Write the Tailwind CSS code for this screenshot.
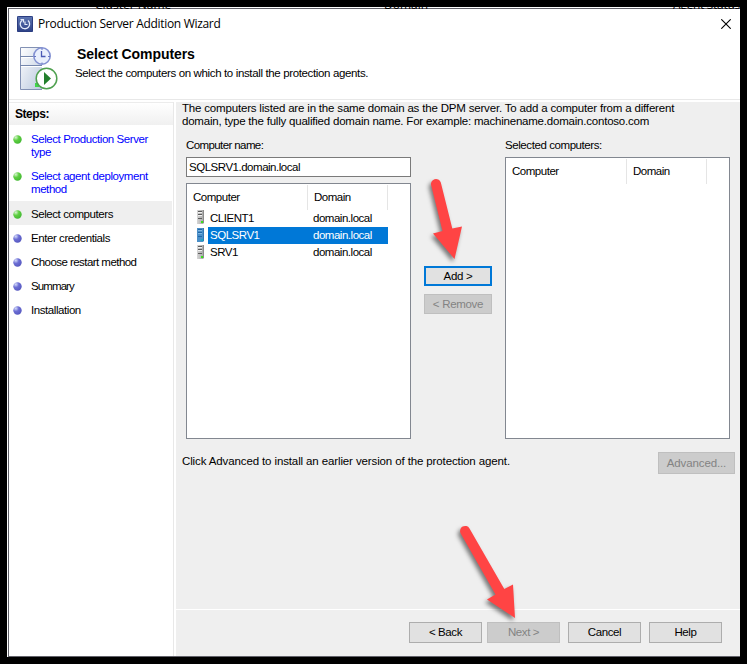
<!DOCTYPE html>
<html lang="en">
<head>
<meta charset="utf-8">
<title>Production Server Addition Wizard</title>
<script src="https://cdn.jsdelivr.net/npm/@tailwindcss/browser@4"></script>
</head>
<body class="w-[747px] h-[664px] overflow-hidden bg-black p-[7px] pb-0 font-['Liberation_Sans',Arial,sans-serif] text-[11.5px] leading-[13px] text-black whitespace-nowrap">
<svg class="absolute w-0 h-0" aria-hidden="true">
  <defs>
    <radialGradient id="gg" cx=".3" cy=".25" r=".8"><stop offset="0" stop-color="#d8f5d2"/><stop offset=".45" stop-color="#5fcf42"/><stop offset="1" stop-color="#42b832"/></radialGradient>
    <radialGradient id="gb" cx=".3" cy=".25" r=".8"><stop offset="0" stop-color="#d4dcfa"/><stop offset=".45" stop-color="#6c6ed4"/><stop offset="1" stop-color="#5658c0"/></radialGradient>
    <linearGradient id="sv" x1="0" x2="1" y1="0" y2="1"><stop offset="0" stop-color="#fff"/><stop offset="1" stop-color="#b9c8de"/></linearGradient>
    <linearGradient id="ti" x1="0" x2="0" y1="0" y2="1"><stop offset="0" stop-color="#5f78b4"/><stop offset="1" stop-color="#2c3f85"/></linearGradient>
    <linearGradient id="tw" x1="0" x2="1"><stop offset="0" stop-color="#d6d6d6"/><stop offset="1" stop-color="#a2a2a2"/></linearGradient>
    <symbol id="dotg" viewBox="0 0 9 9"><circle cx="4.5" cy="4.5" r="4.2" fill="url(#gg)"/></symbol>
    <symbol id="dotb" viewBox="0 0 9 9"><circle cx="4.5" cy="4.5" r="4.2" fill="url(#gb)"/></symbol>
    <symbol id="tower" viewBox="0 0 8 14"><path d="M1 0H8V13L7 14H1Z" fill="url(#tw)"/><path d="M7.500 0V13" stroke="#8a8a8a"/><path d="M2 1.500H6M2 4.500H6M2 8.500H6" stroke="#5c5c5c"/><path d="M2 2.500H6M2 5.500H6" stroke="#f2f2f2"/><rect x="5" y="11" width="2" height="2" fill="#3be01c"/></symbol>
    <symbol id="towersel" viewBox="0 0 8 14"><path d="M1 0H8V13L7 14H1Z" fill="#4a8fc8"/><path d="M7.500 0V13" stroke="#2f78b6"/><path d="M2 1.500H6M2 4.500H6M2 8.500H6" stroke="#1f66a6"/><path d="M2 2.500H6M2 5.500H6" stroke="#7db5e2"/><rect x="5" y="11" width="2" height="2" fill="#1ba8c0"/></symbol>
  </defs>
</svg>
<div class="relative w-[733px] h-[650px] bg-white pl-px pt-px">
  <div class="absolute left-0 top-0 w-full h-[2px] overflow-hidden font-['Open_Sans',sans-serif] text-[12px] leading-[14px]"><span class="absolute left-[88px] -top-[9px]">Cluster Name</span><span class="absolute left-[377px] -top-[9px]">Domain</span><span class="absolute left-[666px] -top-[9px] tracking-[-0.3px]">Agent Status</span></div>
  <div class="w-[732px] h-[649px] border-l border-t border-b border-[#62626a] flex flex-col">
    <header class="h-[91px] border-b border-[#e8e8e8] shrink-0">
      <div class="h-[30px] flex items-center pl-2 pr-[9px]">
        <svg class="size-4 mr-[5px]" viewBox="0 0 16 16"><rect width="16" height="16" rx="1" fill="url(#ti)"/><rect x=".5" y=".5" width="15" height="15" rx="1" fill="none" stroke="#2b3d80"/><path d="M5.500 4A4.700 4.700 0 1 0 11 4.500" fill="none" stroke="#e4ebfa" stroke-width="1.300"/><path d="M3.500 3.500H6.500V6.500M8 5.500V8.500H10.500" fill="none" stroke="#e4ebfa" stroke-width="1.200"/></svg>
        <h1 class="font-['Open_Sans',sans-serif] text-[12px] tracking-[-0.31px] leading-4 grow">Production Server Addition Wizard</h1>
        <svg class="size-[10px]" viewBox="0 0 10 10"><path d="M.3.3 9.700 9.700M9.700.3.3 9.700" stroke="#000" stroke-width="1.100"/></svg>
      </div>
      <div class="flex pl-[11px]">
        <svg class="w-[38px] h-[44px] mt-[8px]" viewBox="0 0 38 44"><path d="M.5.5H22V42.500H.5Z" fill="url(#sv)"/><path d="M22 .5H.5V42.500H22" fill="none" stroke="#8291b4"/><path d="M0 9.500H22M0 18.500H22" stroke="#7587ad"/><path d="M1 10.500H22M1 19.500H22" stroke="#fff"/><path d="M15 36H19V40H15Z" fill="#3fd64a"/><circle cx="22" cy="9" r="8.200" fill="#e9effc" stroke="#8391d2" stroke-width="1.600"/><path d="M21.500 4V9.500H25.500" fill="none" stroke="#4a5ab4" stroke-width="1.300"/><path d="M22 1V3M22 15.500V17M14 9.500H16M28 9.500H30" stroke="#6675c4"/><circle cx="26.500" cy="31.500" r="10.300" fill="#fff" stroke="#4fa04f" stroke-width="1.500"/><path d="M24 25V38L31 31.500Z" fill="#237f2c"/></svg>
        <div class="pl-[17px] pt-[7px]">
          <h2 class="font-bold text-[14px] leading-[17px] pl-[2px] tracking-[-0.08px]">Select Computers</h2>
          <p class="mt-[4px] tracking-[-0.36px]">Select the computers on which to install the protection agents.</p>
        </div>
      </div>
    </header>
    <div class="flex grow">
      <aside class="w-[165px] mt-[2px] border-r border-[#e8e8e8] shrink-0">
        <div class="h-[23px] border-t border-[#ececec] bg-linear-to-b from-white to-[#f0f0f0] pl-[6px] pt-[5px] font-bold tracking-[-0.45px] text-[12px]">Steps:</div>
        <ol class="tracking-[-0.43px]">
          <li class="flex h-[37px] pt-[8px] text-[#0000ff]"><svg class="size-[9px] ml-[4px] mt-[2px] mr-[9px]"><use href="#dotg"/></svg><span>Select Production Server<br>type</span></li>
          <li class="flex h-[39px] pt-[8px] text-[#0000ff]"><svg class="size-[9px] ml-[4px] mt-[2px] mr-[9px]"><use href="#dotg"/></svg><span>Select agent deployment<br>method</span></li>
          <li class="flex h-[24px] w-[163px] pt-[2px] items-center bg-[#efefef]"><svg class="size-[9px] ml-[4px] mr-[9px]"><use href="#dotg"/></svg>Select computers</li>
          <li class="flex h-[24px] pt-[2px] items-center"><svg class="size-[9px] ml-[4px] mr-[9px]"><use href="#dotb"/></svg>Enter credentials</li>
          <li class="flex h-[24px] pt-[2px] items-center tracking-[-0.55px]"><svg class="size-[9px] ml-[4px] mr-[9px]"><use href="#dotb"/></svg>Choose restart method</li>
          <li class="flex h-[24px] pt-[2px] items-center tracking-[-0.9px]"><svg class="size-[9px] ml-[4px] mr-[9px]"><use href="#dotb"/></svg>Summary</li>
          <li class="flex h-[24px] pt-[2px] items-center"><svg class="size-[9px] ml-[4px] mr-[9px]"><use href="#dotb"/></svg>Installation</li>
        </ol>
      </aside>
      <main class="ml-[2px] mt-[2px] grow bg-[#efefef] flex flex-col">
        <div class="h-[507px] pl-[6px]">
          <p class="tracking-[-0.18px]">The computers listed are in the same domain as the DPM server. To add a computer from a different<br><span class="tracking-[-0.21px]">domain, type the fully qualified domain name. For example: machinename.domain.contoso.com</span></p>
          <div class="flex pl-[4px] pt-[11px] tracking-[-0.48px]">
            <section class="w-[225px]">
              <label class="block h-[18px] tracking-[-0.6px]">Computer name:</label>
              <div class="h-[20px] border border-[#7a7a7a] bg-white pl-[2px] leading-[18px]">SQLSRV1.domain.local</div>
              <div class="mt-[6px] h-[256px] border border-[#828790] bg-white">
                <div class="flex h-[25px] mt-px leading-[25px]"><span class="w-[121px] border-r border-[#e5e5e5] pl-[6px]">Computer</span><span class="w-[80px] border-r border-[#e5e5e5] pl-[6px]">Domain</span></div>
                <div class="flex h-[17px] leading-[17px]"><svg class="w-2 h-[14px] ml-[9px] mr-[4px]"><use href="#tower"/></svg><span class="w-[105px] pl-[2px]">CLIENT1</span><span>domain.local</span></div>
                <div class="flex h-[17px] leading-[17px]"><svg class="w-2 h-[14px] ml-[9px] mt-px mr-[4px]"><use href="#towersel"/></svg><div class="flex w-[180px] bg-[#0078d7] text-white"><span class="w-[105px] pl-[2px]">SQLSRV1</span><span>domain.local</span></div></div>
                <div class="flex h-[17px] leading-[17px]"><svg class="w-2 h-[14px] ml-[9px] mt-px mr-[4px]"><use href="#tower"/></svg><span class="w-[105px] pl-[2px]">SRV1</span><span>domain.local</span></div>
              </div>
            </section>
            <div class="w-[94px] pt-[127px] flex flex-col items-center gap-[8px] tracking-[-0.3px]">
              <button class="w-[68px] h-[20px] border-2 border-[#0078d7] bg-[#e1e1e1]">Add &gt;</button>
              <button class="w-[68px] h-[20px] border border-[#bfbfbf] bg-[#cccccc] text-[#838383]">&lt; Remove</button>
            </div>
            <section class="w-[225px]">
              <label class="block h-[18px] tracking-[-0.42px]">Selected computers:</label>
              <div class="h-[282px] border border-[#828790] bg-white"><div class="flex h-[25px] mt-px leading-[25px]"><span class="w-[121px] border-r border-[#e5e5e5] pl-[6px]">Computer</span><span class="w-[80px] border-r border-[#e5e5e5] pl-[6px]">Domain</span></div></div>
            </section>
          </div>
          <div class="flex justify-between pt-[13px] pr-[5px] tracking-[-0.12px]"><p class="pt-[3px]">Click Advanced to install an earlier version of the protection agent.</p><button class="w-[77px] h-[22px] border border-[#bfbfbf] bg-[#cccccc] text-[#838383]">Advanced...</button></div>
        </div>
        <footer class="border-t border-white grow flex pt-[12px] pl-[233px] tracking-[-0.4px]">
          <button class="w-[73px] h-[21px] border border-[#adadad] bg-[#e1e1e1]">&lt; Back</button>
          <button class="ml-[5px] w-[73px] h-[21px] border border-[#bfbfbf] bg-[#cccccc] text-[#838383]">Next &gt;</button>
          <button class="ml-[8px] w-[73px] h-[21px] border border-[#adadad] bg-[#e1e1e1]">Cancel</button>
          <button class="ml-[8px] w-[73px] h-[21px] border border-[#adadad] bg-[#e1e1e1]">Help</button>
        </footer>
      </main>
    </div>
  </div>
</div>
<svg class="absolute left-0 top-0 w-[747px] h-[664px] pointer-events-none drop-shadow-[-2px_3px_2px_rgba(0,0,0,0.5)]" viewBox="0 0 747 664" fill="#ff4444">
  <path d="M431.200 185.500A5 5 0 0 1 440.800 182.500L452.300 228.500 462 226.500 454.500 259 433 233.500 442.500 231Z"/>
  <path d="M460.700 533.500A5 5 0 0 1 469.500 528.500L504.300 589 513 584.500 515 618 487 599.500 495.500 594.500Z"/>
</svg>
</body>
</html>
